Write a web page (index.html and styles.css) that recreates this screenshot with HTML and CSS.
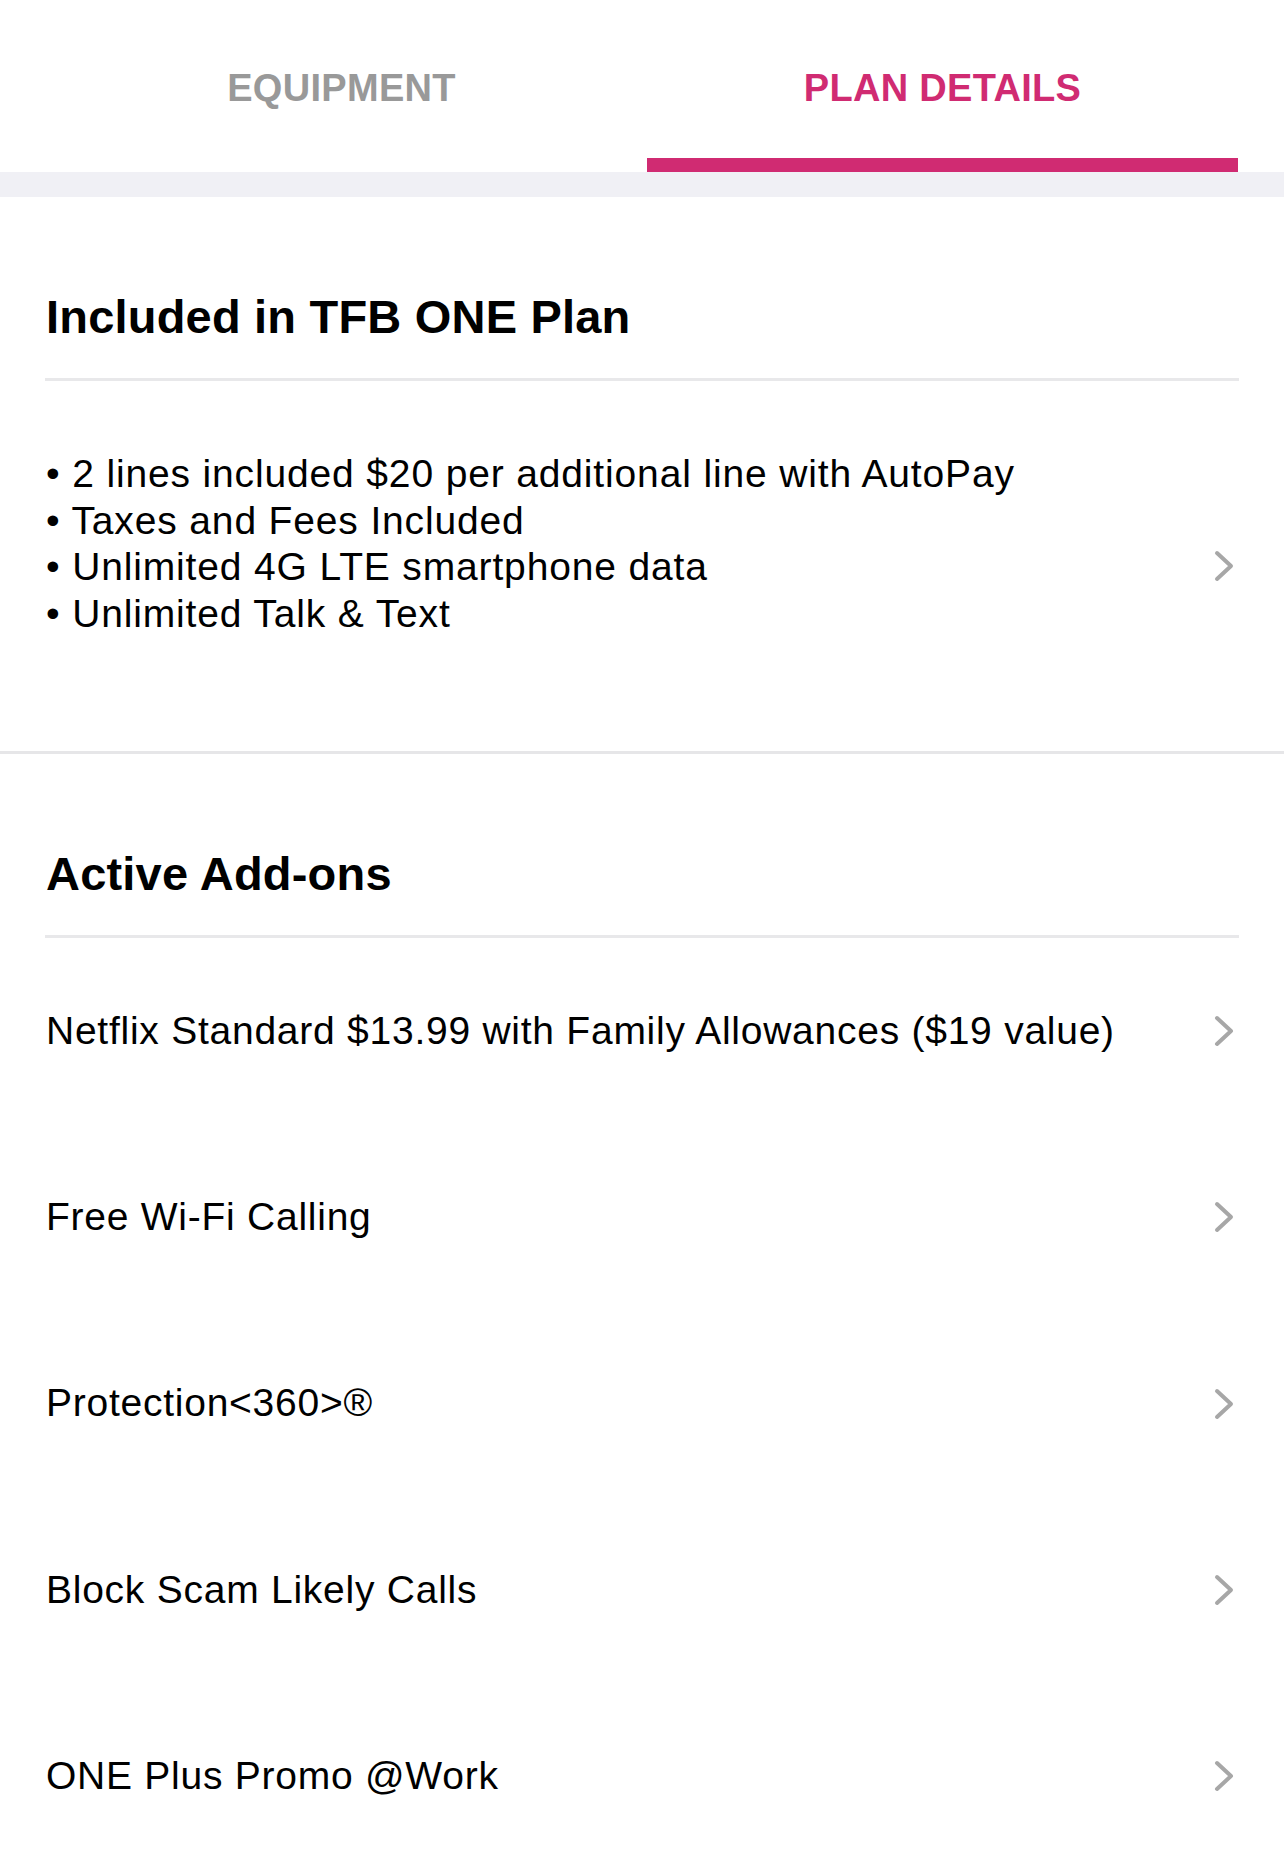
FILE: index.html
```html
<!DOCTYPE html>
<html lang="en">
<head>
<meta charset="utf-8">
<title>Plan Details</title>
<link rel="stylesheet" href="styles.css">
</head>
<body>
<nav class="tabs">
  <div class="tab">EQUIPMENT</div>
  <div class="tab tab-active">PLAN DETAILS</div>
</nav>
<div class="band"></div>

<section class="section">
  <h2 class="heading">Included in TFB ONE Plan</h2>
  <div class="rule"></div>
  <div class="plan-row">
    <div class="bullets">
      <div>• 2 lines included $20 per additional line with AutoPay</div>
      <div>• Taxes and Fees Included</div>
      <div>• Unlimited 4G LTE smartphone data</div>
      <div>• Unlimited Talk &amp; Text</div>
    </div>
    <svg class="chev" viewBox="0 0 20 32" width="20" height="32"><path d="M3 3 L17 16 L3 29" fill="none" stroke="#a7a7a7" stroke-width="4" stroke-linecap="round" stroke-linejoin="round"/></svg>
  </div>
</section>
<div class="full-rule"></div>

<section class="section">
  <h2 class="heading">Active Add-ons</h2>
  <div class="rule"></div>
  <div class="row"><span class="row-text">Netflix Standard $13.99 with Family Allowances ($19 value)</span><svg class="chev" viewBox="0 0 20 32" width="20" height="32"><path d="M3 3 L17 16 L3 29" fill="none" stroke="#a7a7a7" stroke-width="4" stroke-linecap="round" stroke-linejoin="round"/></svg></div>
  <div class="row"><span class="row-text">Free Wi-Fi Calling</span><svg class="chev" viewBox="0 0 20 32" width="20" height="32"><path d="M3 3 L17 16 L3 29" fill="none" stroke="#a7a7a7" stroke-width="4" stroke-linecap="round" stroke-linejoin="round"/></svg></div>
  <div class="row"><span class="row-text">Protection&lt;360&gt;®</span><svg class="chev" viewBox="0 0 20 32" width="20" height="32"><path d="M3 3 L17 16 L3 29" fill="none" stroke="#a7a7a7" stroke-width="4" stroke-linecap="round" stroke-linejoin="round"/></svg></div>
  <div class="row"><span class="row-text">Block Scam Likely Calls</span><svg class="chev" viewBox="0 0 20 32" width="20" height="32"><path d="M3 3 L17 16 L3 29" fill="none" stroke="#a7a7a7" stroke-width="4" stroke-linecap="round" stroke-linejoin="round"/></svg></div>
  <div class="row"><span class="row-text">ONE Plus Promo @Work</span><svg class="chev" viewBox="0 0 20 32" width="20" height="32"><path d="M3 3 L17 16 L3 29" fill="none" stroke="#a7a7a7" stroke-width="4" stroke-linecap="round" stroke-linejoin="round"/></svg></div>
</section>
</body>
</html>
```

FILE: styles.css
```css
* { box-sizing: border-box; }
html, body { margin: 0; padding: 0; background: #fff; }
body {
  font-family: "Liberation Sans", Arial, sans-serif;
  color: #000;
  overflow: hidden;
}

.tabs {
  display: flex;
  gap: 10px;
  padding: 0 46px;
  height: 172px;
}
.tab {
  flex: 1;
  display: flex;
  justify-content: center;
  padding-top: 66px;
  font-size: 38px;
  font-weight: 700;
  line-height: 44px;
  letter-spacing: 0.3px;
  color: #999999;
  border-bottom: 14px solid transparent;
}
.tab-active {
  color: #d02b72;
  border-bottom-color: #d02b72;
}
.band {
  height: 25px;
  background: #f0f0f5;
}

.section {
  padding: 92px 0 0;
}
.heading {
  margin: 0 0 33px;
  padding: 0 46px;
  font-size: 47px;
  font-weight: 700;
  line-height: 56px;
  letter-spacing: 0.2px;
}
.rule {
  height: 3px;
  margin: 0 45px;
  background: #e8e8ea;
}
.full-rule {
  height: 3px;
  background: #e6e6e8;
}

.plan-row {
  display: flex;
  align-items: center;
  justify-content: space-between;
  height: 370px;
  padding: 0 50px 0 46px;
}
.bullets {
  align-self: flex-start;
  padding-top: 70px;
  font-size: 39px;
  line-height: 46.7px;
  letter-spacing: 0.85px;
}

.row {
  display: flex;
  align-items: center;
  justify-content: space-between;
  height: 186.3px;
  padding: 0 50px 0 46px;
  font-size: 39px;
  line-height: 46.7px;
  letter-spacing: 0.75px;
}
.chev {
  flex: none;
  display: block;
}
```
